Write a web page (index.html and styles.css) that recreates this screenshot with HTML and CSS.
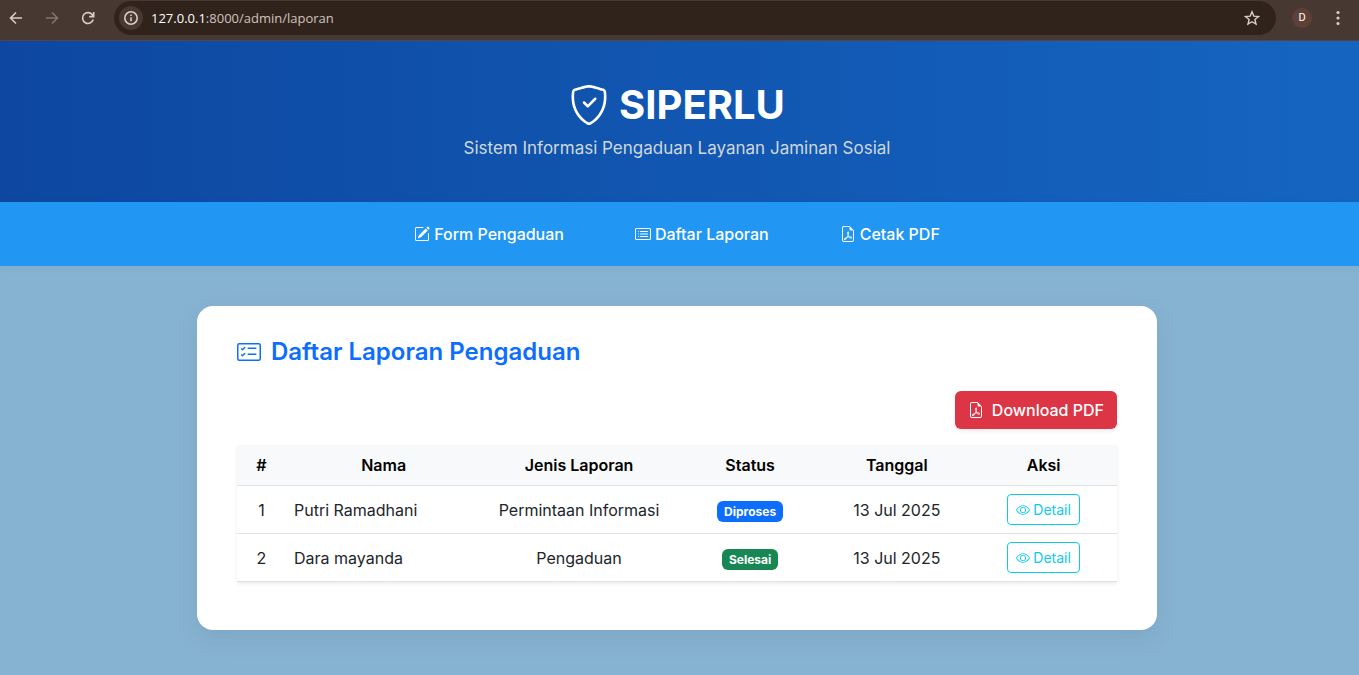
FILE: index.html
```html
<!DOCTYPE html>
<html lang="id">
<head>
<meta charset="utf-8">
<meta name="viewport" content="width=device-width, initial-scale=1">
<title>SIPERLU - Daftar Laporan</title>
<link rel="stylesheet" href="styles.css">
</head>
<body>
<svg class="sprite" aria-hidden="true">
  <symbol id="file-pdf" viewBox="0 0 16 16">
    <path d="M14 14V4.500L9.500 0H4a2 2 0 0 0-2 2v12a2 2 0 0 0 2 2h8a2 2 0 0 0 2-2M9.500 3A1.500 1.500 0 0 0 11 4.500h2V14a1 1 0 0 1-1 1H4a1 1 0 0 1-1-1V2a1 1 0 0 1 1-1h5.500z"/>
    <path d="M4.603 14.087a.8.8 0 0 1-.438-.42c-.195-.388-.13-.776.08-1.102.198-.307.526-.568.897-.787a7.700 7.700 0 0 1 1.482-.645 20 20 0 0 0 1.062-2.227 7.300 7.300 0 0 1-.43-1.295c-.086-.4-.119-.796-.046-1.136.075-.354.274-.672.650-.823.192-.077.400-.120.602-.077a.7.7 0 0 1 .477.365c.088.164.120.356.127.538.007.188-.012.396-.047.614-.084.510-.270 1.134-.520 1.794a11 11 0 0 0 .980 1.686 5.800 5.800 0 0 1 1.334.050c.364.066.734.195.960.465.120.144.193.320.200.518.007.192-.047.382-.138.563a1.040 1.040 0 0 1-.354.416.86.86 0 0 1-.510.138c-.331-.014-.654-.196-.933-.417a5.700 5.700 0 0 1-.911-.950 11.700 11.700 0 0 0-1.997.406 11.300 11.300 0 0 1-1.020 1.510c-.292.350-.609.656-.927.787a.8.8 0 0 1-.580.029m1.379-1.901q-.250.115-.459.238c-.328.194-.541.383-.647.547-.094.145-.096.250-.040.361q.016.032.026.044l.035-.012c.137-.056.355-.235.635-.572a8 8 0 0 0 .450-.606m1.640-1.330a13 13 0 0 1 1.010-.193 12 12 0 0 1-.510-.858 21 21 0 0 1-.500 1.050zm2.446.450q.226.245.435.410c.240.190.407.253.498.256a.1.1 0 0 0 .070-.015.3.3 0 0 0 .094-.125.44.44 0 0 0 .059-.200.1.1 0 0 0-.026-.063c-.052-.062-.200-.152-.518-.209a4 4 0 0 0-.612-.053zM8.078 7.800a7 7 0 0 0 .200-.828q.046-.282.038-.465a.6.6 0 0 0-.032-.198.5.5 0 0 0-.145.040c-.087.035-.158.106-.196.283-.040.192-.030.469.046.822q.036.167.090.346z"/>
  </symbol>
  <symbol id="eye" viewBox="0 0 16 16">
    <path d="M16 8s-3-5.500-8-5.500S0 8 0 8s3 5.500 8 5.500S16 8 16 8M1.173 8a13 13 0 0 1 1.660-2.043C4.120 4.668 5.880 3.500 8 3.500s3.879 1.168 5.168 2.457A13 13 0 0 1 14.828 8q-.086.130-.195.288c-.335.480-.830 1.120-1.465 1.755C11.879 11.332 10.119 12.500 8 12.500s-3.879-1.168-5.168-2.457A13 13 0 0 1 1.172 8z"/>
    <path d="M8 5.500a2.500 2.500 0 1 0 0 5 2.500 2.500 0 0 0 0-5M4.500 8a3.500 3.500 0 1 1 7 0 3.500 3.500 0 0 1-7 0"/>
  </symbol>
</svg>

<div class="browser">
  <button class="tool" aria-label="Back"><svg viewBox="0 0 16 16"><path class="line" d="M14 8H3M8 2.500 2.500 8 8 13.500"/></svg></button>
  <button class="tool dim" aria-label="Forward" disabled><svg viewBox="0 0 16 16"><path class="line" d="M2 8h11M8 2.500 13.500 8 8 13.500"/></svg></button>
  <button class="tool" aria-label="Reload"><svg viewBox="0 0 16 16"><path class="line" d="M13.200 9.500A5.400 5.400 0 1 1 12.500 5L13.500 6.400M13.700 2v4.600H9.200"/></svg></button>
  <div class="address">
    <button class="info" aria-label="Site information"><svg viewBox="0 0 16 16"><circle class="line" cx="8" cy="8" r="6.200"/><path class="line" d="M8 7.300v4M8 4.500v1.500"/></svg></button>
    <span class="url"><b>127.0.0.1</b>:8000/admin/laporan</span>
    <button class="star" aria-label="Bookmark"><svg viewBox="0 0 16 16"><path class="line thin" d="m8 1.800 1.800 4.300 4.700.4-3.600 3 1.100 4.600L8 11.700l-4 2.400 1.100-4.600-3.600-3 4.700-.4z"/></svg></button>
  </div>
  <button class="avatar" aria-label="Profile">D</button>
  <button class="tool menu" aria-label="Menu"><svg viewBox="0 0 16 16"><circle cx="8" cy="2.500" r="1.600"/><circle cx="8" cy="8" r="1.600"/><circle cx="8" cy="13.500" r="1.600"/></svg></button>
</div>

<header class="hero">
  <h1 class="brand">
    <svg class="icon" viewBox="0 0 16 16"><path d="M5.338 1.590a61 61 0 0 0-2.837.856.48.48 0 0 0-.328.390c-.554 4.157.726 7.190 2.253 9.188a10.700 10.700 0 0 0 2.287 2.233c.346.244.652.420.893.533q.180.085.293.118a1 1 0 0 0 .101.025 1 1 0 0 0 .100-.025q.114-.034.294-.118c.240-.113.547-.290.893-.533a10.700 10.700 0 0 0 2.287-2.233c1.527-1.997 2.807-5.031 2.253-9.188a.48.48 0 0 0-.328-.390c-.651-.213-1.750-.560-2.837-.855C9.552 1.290 8.531 1.067 8 1.067c-.530 0-1.552.223-2.662.524zM5.072.560C6.157.265 7.310 0 8 0s1.843.265 2.928.560c1.110.300 2.229.655 2.887.870a1.540 1.540 0 0 1 1.044 1.262c.596 4.477-.787 7.795-2.465 9.990a11.800 11.800 0 0 1-2.517 2.453 7 7 0 0 1-1.048.625c-.280.132-.581.240-.829.240s-.548-.108-.829-.240a7 7 0 0 1-1.048-.625 11.800 11.800 0 0 1-2.517-2.453C1.928 10.487.545 7.169 1.141 2.692A1.540 1.540 0 0 1 2.185 1.430 63 63 0 0 1 5.072.560"/><path d="M10.854 5.146a.5.5 0 0 1 0 .708l-3 3a.5.5 0 0 1-.708 0l-1.500-1.500a.5.5 0 1 1 .708-.708L7.500 7.793l2.646-2.647a.5.5 0 0 1 .708 0"/></svg>
    SIPERLU
  </h1>
  <p class="tagline">Sistem Informasi Pengaduan Layanan Jaminan Sosial</p>
</header>

<nav class="nav">
  <a href="#form"><svg class="icon" viewBox="0 0 16 16"><path d="M15.502 1.940a.5.5 0 0 1 0 .706L14.459 3.690l-2-2L13.502.646a.5.5 0 0 1 .707 0l1.293 1.293zm-1.750 2.456-2-2L4.939 9.210a.5.5 0 0 0-.121.196l-.805 2.414a.25.25 0 0 0 .316.316l2.414-.805a.5.5 0 0 0 .196-.120l6.813-6.814z"/><path fill-rule="evenodd" d="M1 13.500A1.500 1.500 0 0 0 2.500 15h11a1.500 1.500 0 0 0 1.500-1.500v-6a.5.5 0 0 0-1 0v6a.5.5 0 0 1-.500.500h-11a.5.5 0 0 1-.500-.500v-11a.5.5 0 0 1 .500-.500H9a.5.5 0 0 0 0-1H2.500A1.500 1.500 0 0 0 1 2.500z"/></svg>Form Pengaduan</a>
  <a href="#laporan"><svg class="icon" viewBox="0 0 16 16"><path d="M14.500 3a.5.5 0 0 1 .500.500v9a.5.5 0 0 1-.500.500h-13a.5.5 0 0 1-.500-.500v-9a.5.5 0 0 1 .500-.500zm-13-1A1.500 1.500 0 0 0 0 3.500v9A1.500 1.500 0 0 0 1.500 14h13a1.500 1.500 0 0 0 1.500-1.500v-9A1.500 1.500 0 0 0 14.500 2z"/><path d="M5 8a.5.5 0 0 1 .500-.500h7a.5.5 0 0 1 0 1h-7A.5.5 0 0 1 5 8m0-2.500a.5.5 0 0 1 .500-.500h7a.5.5 0 0 1 0 1h-7a.5.5 0 0 1-.500-.500m0 5a.5.5 0 0 1 .500-.500h7a.5.5 0 0 1 0 1h-7a.5.5 0 0 1-.500-.500m-1-5a.5.5 0 1 1-1 0 .5.5 0 0 1 1 0M4 8a.5.5 0 1 1-1 0 .5.5 0 0 1 1 0m0 2.500a.5.5 0 1 1-1 0 .5.5 0 0 1 1 0"/></svg>Daftar Laporan</a>
  <a href="#pdf"><svg class="icon"><use href="#file-pdf"/></svg>Cetak PDF</a>
</nav>

<main class="content">
  <section class="card">
    <h2 class="title"><svg class="icon" viewBox="0 0 16 16"><path d="M14.500 3a.5.5 0 0 1 .500.500v9a.5.5 0 0 1-.500.500h-13a.5.5 0 0 1-.500-.500v-9a.5.5 0 0 1 .500-.500zm-13-1A1.500 1.500 0 0 0 0 3.500v9A1.500 1.500 0 0 0 1.500 14h13a1.500 1.500 0 0 0 1.500-1.500v-9A1.500 1.500 0 0 0 14.500 2z"/><path d="M7 5.500a.5.5 0 0 1 .500-.500h5a.5.5 0 0 1 0 1h-5a.5.5 0 0 1-.500-.500m-1.496-.854a.5.5 0 0 1 0 .708l-1.500 1.500a.5.5 0 0 1-.708 0l-.500-.500a.5.5 0 1 1 .708-.708l.146.147 1.146-1.147a.5.5 0 0 1 .708 0M7 9.500a.5.5 0 0 1 .500-.500h5a.5.5 0 0 1 0 1h-5a.5.5 0 0 1-.500-.500m-1.496-.854a.5.5 0 0 1 0 .708l-1.500 1.500a.5.5 0 0 1-.708 0l-.500-.500a.5.5 0 0 1 .708-.708l.146.147 1.146-1.147a.5.5 0 0 1 .708 0"/></svg>Daftar Laporan Pengaduan</h2>
    <div class="actions">
      <a class="download" href="#download"><svg class="icon"><use href="#file-pdf"/></svg>Download PDF</a>
    </div>
    <table class="reports">
      <colgroup><col class="col-no"><col class="col-wide"><col class="col-wide"><col><col><col></colgroup>
      <thead>
        <tr><th>#</th><th>Nama</th><th>Jenis Laporan</th><th>Status</th><th>Tanggal</th><th>Aksi</th></tr>
      </thead>
      <tbody>
        <tr><td>1</td><td class="name">Putri Ramadhani</td><td>Permintaan Informasi</td><td><span class="badge">Diproses</span></td><td>13 Jul 2025</td><td><a class="detail" href="#1"><svg class="icon"><use href="#eye"/></svg>Detail</a></td></tr>
        <tr><td>2</td><td class="name">Dara mayanda</td><td>Pengaduan</td><td><span class="badge done">Selesai</span></td><td>13 Jul 2025</td><td><a class="detail" href="#2"><svg class="icon"><use href="#eye"/></svg>Detail</a></td></tr>
      </tbody>
    </table>
  </section>
</main>
</body>
</html>
```
FILE: styles.css
```css
* { box-sizing: border-box; }

body {
  margin: 0;
  min-height: 100vh;
  background: #87b3d2;
  color: #212529;
  font: 16px/24px Inter, "Liberation Sans", sans-serif;
}

h1, h2, p { margin: 0; }
a { text-decoration: none; }
button { padding: 0; border: 0; background: none; color: inherit; font: inherit; }

.sprite { display: none; }
.icon { width: 1em; height: 1em; flex: none; fill: currentColor; }

/* Browser toolbar */
.browser {
  display: flex;
  align-items: center;
  gap: 20px;
  padding: 1px 13px 5px 8px;
  border-bottom: 1px solid #55463e;
  background: #473931;
  color: #dccdc4;
}
.browser button { display: grid; place-items: center; flex: none; }
.browser svg { width: 16px; height: 16px; fill: currentColor; }
.browser .line { fill: none; stroke: currentColor; stroke-width: 1.600; }
.browser .thin { stroke-width: 1.400; }
.tool { width: 16px; height: 16px; }
.browser .dim { color: #84756c; }
.address {
  display: flex;
  align-items: center;
  flex: 1;
  gap: 8px;
  height: 34px;
  margin-left: -2px;
  padding: 0 16px 0 5px;
  border-radius: 17px;
  background: #30231c;
}
.browser .info { width: 24px; height: 24px; border-radius: 50%; background: #473931; }
.url { flex: 1; font: 13px/20px "Open Sans", "Noto Sans", sans-serif; color: #cfc4bd; }
.url b { font-weight: 400; color: #fff; }
.star { width: 16px; height: 16px; }
.browser .avatar {
  width: 20px;
  height: 20px;
  margin-left: -4px;
  border-radius: 50%;
  background: #5f4038;
  color: #fff;
  font: 11px/20px Roboto, sans-serif;
}
.menu { margin-left: -2px; }

/* Page header */
.hero {
  padding: 40px 5px 42px 0;
  background: linear-gradient(90deg, #0d47a1, #1565c0);
  color: #fff;
  text-align: center;
}
.brand {
  display: flex;
  align-items: center;
  justify-content: center;
  gap: 10px;
  margin-bottom: 7px;
  font-size: 40px;
  line-height: 48px;
  font-weight: 700;
}
.tagline { font-size: 17px; color: #cfd8dc; }

.nav {
  display: flex;
  justify-content: center;
  gap: 71px;
  padding: 20px 5px 20px 0;
  background: #2196f3;
  box-shadow: 0 2px 8px rgba(0, 0, 0, .05);
}
.nav a { display: flex; align-items: center; gap: 4px; color: #fff; font-weight: 500; }

/* Reports card */
.content { padding: 40px 5px 40px 0; }
.card {
  max-width: 960px;
  margin: 0 auto;
  padding: 31px 40px 48px;
  border-radius: 16px;
  background: #fff;
  box-shadow: 0 8px 24px rgba(0, 0, 0, .08);
}
.title {
  display: flex;
  align-items: center;
  gap: 10px;
  margin-bottom: 25px;
  color: #0d6efd;
  font-size: 24px;
  line-height: 29px;
  font-weight: 600;
}
.actions { display: flex; justify-content: flex-end; margin-bottom: 16px; }
.download {
  display: flex;
  align-items: center;
  gap: 8px;
  padding: 7px 13px;
  border-radius: 6px;
  background: #dc3545;
  box-shadow: 0 2px 4px rgba(0, 0, 0, .08);
  color: #fff;
  font-weight: 500;
}

.reports {
  width: 100%;
  table-layout: fixed;
  border-collapse: collapse;
  box-shadow: 0 2px 4px rgba(0, 0, 0, .08);
  text-align: center;
}
.col-no { width: 49px; }
.col-wide { width: 22.2%; }
.reports th, .reports td { padding: 8px; border-bottom: 1px solid #dee2e6; }
.reports th { background: #f8f9fa; color: #000; font-weight: 600; }
.reports .name { text-align: left; }
.badge {
  display: inline-block;
  padding: 4px 7px;
  border-radius: 6px;
  background: #0d6efd;
  color: #fff;
  font-size: 12px;
  line-height: 13px;
  font-weight: 700;
  vertical-align: middle;
}
.done { background: #198754; }
.detail {
  display: inline-flex;
  align-items: center;
  gap: 3px;
  padding: 4px 8px;
  border: 1px solid #0dcaf0;
  border-radius: 4px;
  color: #0dcaf0;
  font-size: 14px;
  line-height: 21px;
  vertical-align: middle;
}
```
